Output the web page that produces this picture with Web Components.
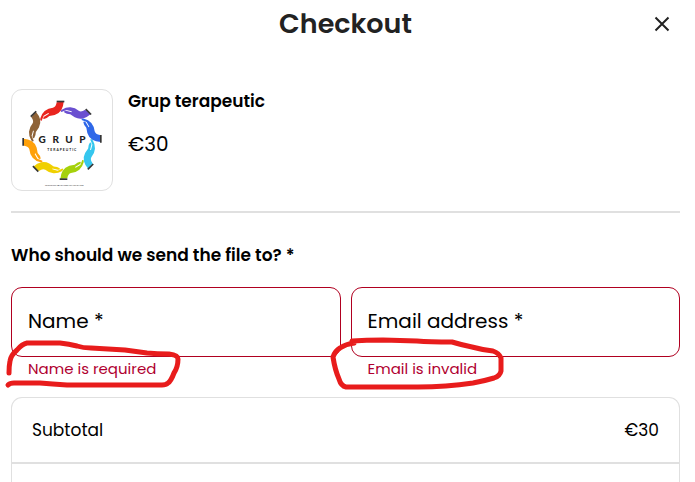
<!DOCTYPE html>
<html lang="en">
<head>
<meta charset="utf-8">
<meta name="viewport" content="width=device-width, initial-scale=1">
<title>Checkout</title>
<style>
  body {
    margin: 0;
    background: #fff;
    color: #000;
    font-family: Poppins, Inter, "Open Sans", sans-serif;
  }
</style>
</head>
<body>
<checkout-page>
  <checkout-header>Checkout</checkout-header>
  <product-item>
    <group-logo slot="image"></group-logo>
    <span slot="name">Grup terapeutic</span>
    <span slot="price">€30</span>
  </product-item>
  <recipient-form>
    <span slot="title">Who should we send the file to? *</span>
    <form-field type="text" label="Name *" error="Name is required">
      <marker-loop shape="name"></marker-loop>
    </form-field>
    <form-field type="email" label="Email address *" error="Email is invalid">
      <marker-loop shape="email"></marker-loop>
    </form-field>
  </recipient-form>
  <order-summary>
    <span slot="label">Subtotal</span>
    <span slot="amount">€30</span>
  </order-summary>
</checkout-page>

<script>
class CheckoutPage extends HTMLElement {
  constructor() {
    super();
    this.attachShadow({ mode: 'open' });
    this.shadowRoot.innerHTML = `
      <style>
        :host {
          display: flex;
          flex-direction: column;
          box-sizing: border-box;
          min-height: 100vh;
          padding: 0 15px 0 11px;
        }
      </style>
      <slot></slot>`;
  }
}

class CheckoutHeader extends HTMLElement {
  constructor() {
    super();
    this.attachShadow({ mode: 'open' });
    this.shadowRoot.innerHTML = `
      <style>
        :host {
          display: grid;
          grid-template-columns: 36px 1fr 36px;
          align-items: center;
          height: 48px;
          color: #222;
        }
        h1 {
          grid-column: 2;
          margin: 0;
          font-size: 27px;
          font-weight: 600;
          line-height: 40px;
          text-align: center;
        }
        button {
          display: grid;
          place-items: center;
          width: 36px;
          height: 36px;
          padding: 0;
          border: 0;
          background: none;
          color: inherit;
          cursor: pointer;
        }
      </style>
      <h1><slot></slot></h1>
      <button type="button" aria-label="Close">
        <svg width="16" height="16" viewBox="0 0 16 16" fill="none" stroke="currentColor" stroke-width="2">
          <path d="M1.5 1.5 14.5 14.5M14.5 1.5 1.5 14.5"/>
        </svg>
      </button>`;
  }
}

class ProductItem extends HTMLElement {
  constructor() {
    super();
    this.attachShadow({ mode: 'open' });
    this.shadowRoot.innerHTML = `
      <style>
        :host {
          display: flex;
          gap: 15px;
          margin-top: 41px;
          padding-bottom: 20px;
          border-bottom: 2px solid #e0e0e0;
        }
        h2 {
          margin: 0;
          font-size: 17px;
          font-weight: 600;
          line-height: 24px;
        }
        p {
          margin: 16px 0 0;
          font-size: 20px;
          line-height: 30px;
        }
      </style>
      <slot name="image"></slot>
      <div>
        <h2><slot name="name"></slot></h2>
        <p><slot name="price"></slot></p>
      </div>`;
  }
}

// ring of eight hands, one drawing turned in 45 degree steps
class GroupLogo extends HTMLElement {
  constructor() {
    super();
    const colors = ['#e9251f', '#6a4fd0', '#2f68e8', '#35c6ee', '#a5d10b', '#f0d000', '#ffa10a', '#8e6237'];
    const hands = colors.map((color, i) => `
      <g transform="rotate(${i * 45} 186 181)" fill="${color}">
        <path d="M170 67L191 65Q190 80 184 90Q177 101 164 105L148 108Q140 116 132 117Q127 116 132 110L147 101L145 99L131 107L125 122Q119 124 121 115Q124 102 134 93Q145 84 159 83Q168 81 170 67Z"/>
        <path d="M170 62H193V67H170Z" fill="#353535"/>
      </g>`).join('');

    this.attachShadow({ mode: 'open' });
    this.shadowRoot.innerHTML = `
      <style>
        :host {
          display: block;
          width: 100px;
          height: 100px;
          border: 1px solid #e0e0e0;
          border-radius: 11px;
        }
        svg { display: block; }
      </style>
      <svg width="100" height="100" viewBox="36 30 300 300" role="img" aria-label="Grup terapeutic">
        ${hands}
        <g fill="#222" font-family="Lato, sans-serif" text-anchor="middle">
          <g font-size="30" font-weight="900">
            <text x="126" y="189">G</text>
            <text x="167" y="189">R</text>
            <text x="207" y="189">U</text>
            <text x="247" y="189">P</text>
          </g>
          <text x="187" y="212" font-size="10" font-weight="700" letter-spacing="3">TERAPEUTIC</text>
          <text x="193" y="317" font-size="7">WWW.FUNDATIACOMUNITARA.RO</text>
        </g>
      </svg>`;
  }
}

class RecipientForm extends HTMLElement {
  constructor() {
    super();
    this.attachShadow({ mode: 'open' });
    this.shadowRoot.innerHTML = `
      <style>
        :host { display: block; margin-top: 30px; }
        h2 {
          margin: 0 0 20px;
          font-size: 17px;
          font-weight: 600;
          line-height: 24px;
        }
        form {
          display: grid;
          grid-template-columns: 1fr 1fr;
          gap: 10px;
        }
      </style>
      <h2><slot name="title"></slot></h2>
      <form novalidate><slot></slot></form>`;
  }
}

class FormField extends HTMLElement {
  constructor() {
    super();
    this.attachShadow({ mode: 'open' });
    this.shadowRoot.innerHTML = `
      <style>
        :host { display: block; min-width: 0; }
        .box { display: grid; }
        label, input {
          grid-area: 1 / 1;
          box-sizing: border-box;
          padding: 0 17px;
          font: inherit;
          font-size: 20px;
        }
        label {
          align-self: center;
          line-height: 28px;
          padding-bottom: 2px;
          pointer-events: none;
          z-index: 1;
        }
        input {
          width: 100%;
          height: 70px;
          border: 1px solid #b00020;
          border-radius: 11px;
          background: #fff;
          outline: none;
        }
        .error {
          position: relative;
          padding-left: 17px;
          color: #b00030;
          font-size: 15px;
          line-height: 24px;
        }
      </style>
      <div class="box">
        <label for="field">${this.getAttribute('label')}</label>
        <input id="field" type="${this.getAttribute('type')}" required aria-invalid="true" aria-describedby="error">
      </div>
      <div class="error"><span id="error">${this.getAttribute('error')}</span><slot></slot></div>`;
  }
}

// hand-drawn red line around an error message
class MarkerLoop extends HTMLElement {
  constructor() {
    super();
    const shapes = {
      name: {
        box: '-13 333 200 60',
        path: 'M9 373Q9 366 10 361Q11 355 17 350Q22 344 27 343L60 343Q69 344 77 346Q83 348 91 348L108 349L125 350L147 353Q157 354 169 354Q178 355 178 359Q178 367 174 373Q171 381 168 383Q166 385 162 385L67 385Q52 384 40 383L14 383Q10 383 8 385'
      },
      email: {
        box: '327 333 200 60',
        path: 'M354 343L352 341Q366 340 383 340L417 341Q429 342 452 342Q462 345 472 347Q483 350 493 351Q499 353 501 358L501 371Q500 376 494 378Q484 381 473 383Q446 387 418 387L346 387Q341 386 339 379Q335 370 333 357Q335 351 340 348Q346 344 354 343'
      }
    };
    const shape = shapes[this.getAttribute('shape')];

    this.attachShadow({ mode: 'open' });
    this.shadowRoot.innerHTML = `
      <style>
        :host {
          position: absolute;
          top: -24px;
          left: -24px;
          z-index: 2;
          pointer-events: none;
        }
        svg { display: block; }
      </style>
      <svg width="200" height="60" viewBox="${shape.box}" fill="none" stroke="#e81c1c" stroke-width="5" stroke-linecap="round" stroke-linejoin="round" aria-hidden="true">
        <path d="${shape.path}"/>
      </svg>`;
  }
}

class OrderSummary extends HTMLElement {
  constructor() {
    super();
    this.attachShadow({ mode: 'open' });
    this.shadowRoot.innerHTML = `
      <style>
        :host {
          display: block;
          flex: 1;
          margin-top: 16px;
          border: 1px solid #e0e0e0;
          border-bottom: 0;
          border-radius: 11px 11px 0 0;
        }
        .row {
          display: flex;
          justify-content: space-between;
          padding: 20px;
          border-bottom: 2px solid #e0e0e0;
          font-size: 17px;
          line-height: 24px;
        }
      </style>
      <div class="row">
        <slot name="label"></slot>
        <slot name="amount"></slot>
      </div>`;
  }
}

customElements.define('checkout-page', CheckoutPage);
customElements.define('checkout-header', CheckoutHeader);
customElements.define('product-item', ProductItem);
customElements.define('group-logo', GroupLogo);
customElements.define('recipient-form', RecipientForm);
customElements.define('form-field', FormField);
customElements.define('marker-loop', MarkerLoop);
customElements.define('order-summary', OrderSummary);
</script>
</body>
</html>
